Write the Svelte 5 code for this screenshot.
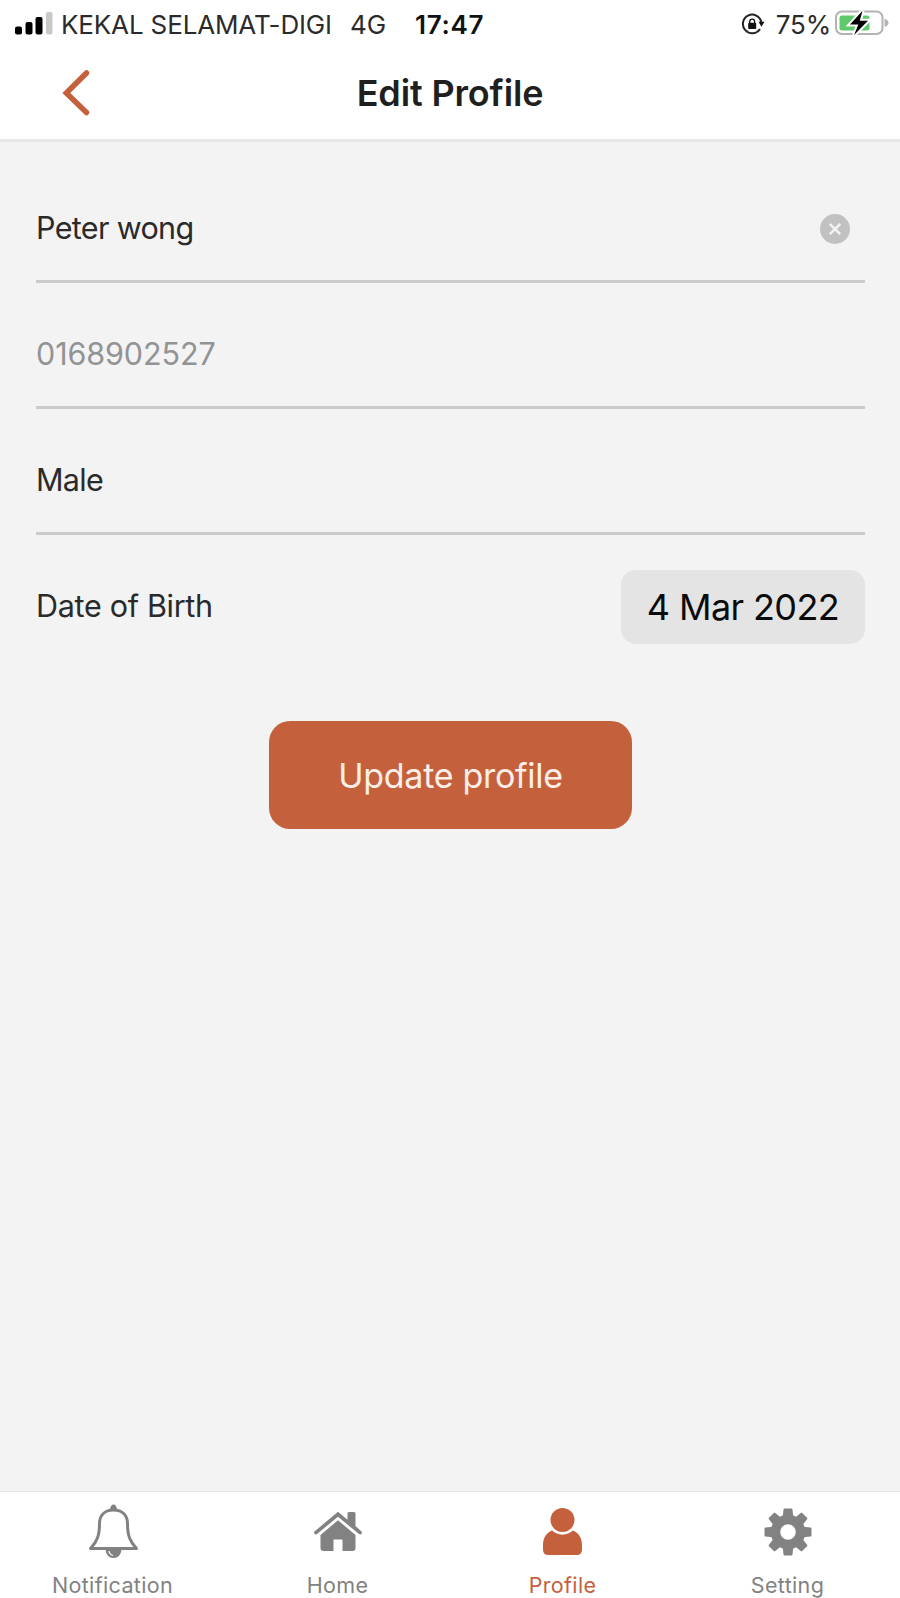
<script>
  let name = 'Peter wong'
  let active = 'Profile'
  const tabs = ['Notification', 'Home', 'Profile', 'Setting']
  const teeth = [0, 45, 90, 135, 180, 225, 270, 315]
</script>

<div class="screen">
  <div class="status">
    <svg class="signal" width="38" height="24" viewBox="0 0 38 24">
      <rect x="0" y="14.5" width="7" height="8" rx="2" />
      <rect x="10.5" y="10" width="7" height="12.5" rx="2" />
      <rect x="20.5" y="5" width="7" height="17.5" rx="2" />
      <rect x="31" y="0" width="6.5" height="22.5" rx="2" fill="#c9c9c9" />
    </svg>
    <span class="carrier">KEKAL SELAMAT-DIGI</span>
    <span class="network">4G</span>
    <span class="time">17:47</span>
    <svg class="lock" width="24" height="22" viewBox="0 0 24 22">
      <path d="M20.3 9A9.3 9.3 0 1 0 19 16" fill="none" stroke="#222" stroke-width="2" />
      <path d="M17.5 8.7h6l-3 5z" fill="#111" />
      <rect x="7.2" y="9.7" width="8" height="6.2" rx="1" fill="#111" />
      <path d="M8.8 10V8.5a2.4 2.4 0 0 1 4.8 0V10" fill="none" stroke="#111" stroke-width="1.4" />
    </svg>
    <span class="percent">75%</span>
    <svg class="battery" width="54" height="28" viewBox="0 0 54 28">
      <rect x="1" y="1.5" width="46.5" height="22.5" rx="6" fill="#fff" stroke="#b3b3b3" stroke-width="2" />
      <path d="M49.5 8.7q4 1 4 4t-4 4z" fill="#b3b3b3" />
      <rect x="4.5" y="5.5" width="30" height="15" rx="2.5" fill="#5fca6c" />
      <path
        d="M27.5.7 15 14.500h8.300l-4.200 10.500L33 10.800h-8.200z"
        fill="#000"
        stroke="#fff"
        stroke-width="4"
        paint-order="stroke"
      />
    </svg>
  </div>

  <header>
    <button class="back" aria-label="Back">
      <svg width="28" height="46" viewBox="0 0 28 46">
        <path d="M24.500 3 4.300 23l20.200 19.500" />
      </svg>
    </button>
    <h1>Edit Profile</h1>
  </header>

  <main>
    <div class="row">
      <span class="name">{name}</span>
      <button class="clear" aria-label="Clear" on:click={() => (name = '')}>
        <svg width="30" height="30" viewBox="0 0 30 30">
          <circle cx="15" cy="15" r="15" />
          <path d="m9.8 9.8 10.4 10.4M20.2 9.8 9.8 20.2" />
        </svg>
      </button>
    </div>
    <div class="row phone">0168902527</div>
    <div class="row gender">Male</div>
    <div class="row birth">
      <span>Date of Birth</span>
      <button class="date">4 Mar 2022</button>
    </div>
    <button class="update">Update profile</button>
  </main>

  <nav>
    {#each tabs as tab}
      <button class="tab" class:active={tab === active} on:click={() => (active = tab)}>
        <svg width="56" height="60" viewBox="0 0 56 60">
          {#if tab === 'Notification'}
            <path
              d="M28.5 8c-9 0-14 5.500-14 14 0 11.500-2.500 17.500-9 24.500h46c-6.500-7-9-13-9-24.500 0-8.500-5-14-14-14z"
              fill="none"
              stroke="currentColor"
              stroke-width="3"
              stroke-linejoin="round"
            />
            <path d="M25 7.500c.5-3.300 1.500-5 3.500-5S31.500 4.200 32 7.500z" />
            <path d="M20.500 47.500h16c-.5 5-3.500 8.500-8 8.500s-7.500-3.500-8-8.500z" />
            <path d="M24 49q.5 3.500 4 4.500" fill="none" stroke="#fff" stroke-width="1.300" />
          {:else if tab === 'Home'}
            <path d="M4.500 29.500 28 9.800l9.500 8V11.500q0-1.500 1.500-1.500h5q1.500 0 1.500 1.500V24l6 5.500q1 1.200 0 2.300t-2.500.2L28 14.800 7 32q-1.500 1-2.500-.2t0-2.300z" />
            <path d="M28 18.300 45.500 33v13q0 3-3 3H32.500V37.500h-9V49h-10q-3 0-3-3V33z" />
          {:else if tab === 'Profile'}
            <circle cx="27.500" cy="18" r="12" />
            <path d="M17 28.500c6 5.500 15 5.500 21 0 5.500 2 9 7.500 9 14.500v4.500q0 5.500-5.500 5.500h-28Q8 53 8 47.500V43c0-7 3.500-12.500 9-14.500z" />
          {:else}
            <circle cx="28" cy="30" r="12.500" fill="none" stroke="currentColor" stroke-width="9.500" />
            {#each teeth as angle}
              <path d="M22.700 15 23.500 7.500q.1-1 1.100-1h6.800q1 0 1.100 1L33.300 15z" transform="rotate({angle} 28 30)" />
            {/each}
          {/if}
        </svg>
        <span>{tab}</span>
      </button>
    {/each}
  </nav>
</div>

<style>
  :global(body) {
    margin: 0;
  }

  .screen {
    font-family: Inter, 'Liberation Sans', sans-serif;
    background: #f3f3f3;
    flex-direction: column;
    overflow: hidden;
    display: flex;
    height: 1598px;
    width: 900px;
  }

  button {
    font: inherit;
    background: none;
    cursor: pointer;
    border: none;
    padding: 0;
  }

  svg {
    display: block;
    flex: none;
  }

  .status {
    box-sizing: border-box;
    align-items: center;
    padding: 0 11px 0 15px;
    background: #fff;
    white-space: nowrap;
    font-size: 26px;
    color: #2b2b2b;
    display: flex;
    height: 48px;
  }

  .signal {
    fill: #000;
  }

  .carrier {
    letter-spacing: -0.15px;
    margin-left: 8px;
    width: 289px;
  }

  .network {
    width: 65px;
  }

  .time {
    letter-spacing: 0.7px;
    font-weight: 600;
    color: #111;
  }

  .lock {
    margin-left: auto;
  }

  .percent {
    letter-spacing: -0.2px;
    margin: 0 4px 0 11px;
  }

  header {
    border-bottom: 3px solid #e8e8e8;
    box-sizing: border-box;
    align-items: center;
    position: relative;
    background: #fff;
    display: flex;
    height: 94px;
    padding: 0 62px 2px;
  }

  .back path {
    stroke-linecap: round;
    stroke: #c4613c;
    stroke-width: 5.5;
    fill: none;
  }

  h1 {
    letter-spacing: -0.15px;
    text-align: center;
    margin: 0 28px 0 0;
    font-weight: 600;
    font-size: 36px;
    color: #1f1f1f;
    flex: 1;
  }

  main {
    flex-direction: column;
    padding: 16px 35px 0 36px;
    display: flex;
    flex: 1;
  }

  .row {
    border-bottom: 3px solid #cbcbcb;
    justify-content: space-between;
    box-sizing: border-box;
    align-items: center;
    padding-top: 17px;
    font-size: 30.5px;
    color: #2a2a2a;
    display: flex;
    height: 126px;
  }

  .row:first-child {
    padding-top: 16px;
    height: 125px;
  }

  .name {
    letter-spacing: -0.65px;
  }

  .clear {
    margin: 4px 15px 0 0;
  }

  .clear circle {
    fill: #c1c1c1;
  }

  .clear path {
    stroke: #f3f3f3;
    stroke-width: 2.6;
  }

  .phone {
    letter-spacing: -0.1px;
    color: #929394;
  }

  .gender {
    letter-spacing: -0.7px;
  }

  .birth {
    letter-spacing: -0.3px;
    border-bottom: none;
    padding-top: 18px;
  }

  .birth span {
    padding-bottom: 3px;
  }

  .date {
    letter-spacing: -0.6px;
    border-radius: 15px;
    background: #e4e4e4;
    font-size: 36px;
    color: #0b0b0b;
    height: 74px;
    width: 244px;
  }

  .update {
    letter-spacing: -0.3px;
    background: #c4613c;
    border-radius: 21px;
    align-self: center;
    margin-top: 60px;
    font-size: 34px;
    color: #fdeee8;
    height: 108px;
    width: 363px;
  }

  nav {
    box-sizing: border-box;
    border-top: 1px solid #e9e9e9;
    background: #fff;
    display: flex;
    height: 107px;
  }

  .tab {
    letter-spacing: 0.35px;
    flex-direction: column;
    align-items: center;
    padding-top: 10px;
    font-size: 21.5px;
    color: #828282;
    display: flex;
    flex: 1;
  }

  .tab svg {
    fill: currentColor;
  }

  .tab span {
    line-height: 26px;
    margin-top: 10px;
  }

  .active {
    color: #c4613c;
  }
</style>
